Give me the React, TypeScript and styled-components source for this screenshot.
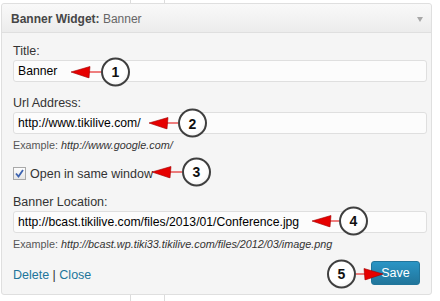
import styled, { createGlobalStyle } from "styled-components";

const GlobalStyle = createGlobalStyle`
  html, body {
    margin: 0;
    padding: 0;
    background: #fff;
  }
  body {
    font-family: "Liberation Sans", Arial, sans-serif;
    color: #333;
  }
`;

const callouts = [
  { n: 1, x: 71, y: 71.5, len: 30 },
  { n: 2, x: 149, y: 123, len: 29 },
  { n: 3, x: 152, y: 171.5, len: 30 },
  { n: 4, x: 312, y: 220.5, len: 27 },
  { n: 5, x: 327, y: 273.5, len: 27, right: true },
];

const App = () => {
  return (
    <Page>
      <GlobalStyle />
      <Stub $height={3} />
      <Widget>
        <Header>
          <HeaderTitle>
            Banner Widget: <span>Banner</span>
          </HeaderTitle>
          <Toggle />
        </Header>
        <Body>
          <Label>Title:</Label>
          <Input>Banner</Input>

          <Label $gap={14}>Url Address:</Label>
          <Input>http://www.tikilive.com/</Input>
          <Example>
            Example: <em>http://www.google.com/</em>
          </Example>

          <CheckRow>
            <CheckBox>
              <svg width="11" height="11" viewBox="0 0 11 11">
                <path d="M2 5.5 L4.5 8.5 L9 2" fill="none" stroke="#3d63b0" strokeWidth="1.8" />
              </svg>
            </CheckBox>
            Open in same window
          </CheckRow>

          <Label $gap={14}>Banner Location:</Label>
          <Input>http://bcast.tikilive.com/files/2013/01/Conference.jpg</Input>
          <Example>
            Example: <em>http://bcast.wp.tiki33.tikilive.com/files/2012/03/image.png</em>
          </Example>
        </Body>
        <Footer>
          <Links>
            <a>Delete</a> | <a>Close</a>
          </Links>
          <SaveButton>Save</SaveButton>
        </Footer>
      </Widget>
      <Stub $height={6} />

      {callouts.map(c => (
        <Callout key={c.n} $x={c.x} $y={c.y} $right={c.right}>
          <svg width={c.len} height="13" viewBox={`0 0 ${c.len} 13`}>
            <line x1="17" y1="6.5" x2={c.len} y2="6.5" stroke="#e00000" strokeWidth="1" />
            <polygon points="0,6.5 19,1 18,12.5" fill="#e60000" stroke="#a00000" strokeWidth="0.6" />
          </svg>
          <Circle>{c.n}</Circle>
        </Callout>
      ))}
    </Page>
  );
};

const Page = styled.div`
  position: relative;
  width: 440px;
  height: 301px;
  overflow: hidden;
`;

const Stub = styled.div<{ $height: number }>`
  width: 33px;
  height: ${p => p.$height}px;
  margin-left: 130px;
  border-left: 1px solid #dcdcdc;
  border-right: 1px solid #dcdcdc;
`;

const Widget = styled.div`
  box-sizing: border-box;
  width: 431px;
  height: 292px;
  margin-left: 1px;
  border: 1px solid #dfdfdf;
  border-radius: 3px;
  background: #f5f5f5;
  display: flex;
  flex-direction: column;
`;

const Header = styled.div`
  height: 28px;
  padding: 0 8px 0 9px;
  display: flex;
  align-items: center;
  justify-content: space-between;
  border-bottom: 1px solid #dfdfdf;
  border-radius: 3px 3px 0 0;
  background: linear-gradient(to bottom, #f9f9f9, #ececec);
`;

const HeaderTitle = styled.div`
  font-size: 12px;
  font-weight: bold;
  color: #464646;
  margin-top: 1px;

  span {
    font-weight: normal;
    color: #666;
  }
`;

const Toggle = styled.div`
  width: 0;
  height: 0;
  margin-top: 3px;
  border-left: 3.5px solid transparent;
  border-right: 3.5px solid transparent;
  border-top: 5px solid #a8a8a8;
`;

const Body = styled.div`
  padding: 11px 4px 0 11px;
  display: flex;
  flex-direction: column;
`;

const Label = styled.div<{ $gap?: number }>`
  font-size: 12.5px;
  line-height: 15px;
  color: #333;
  margin-top: ${p => p.$gap ?? 0}px;
  margin-bottom: 1px;
`;

const Input = styled.div`
  box-sizing: border-box;
  height: 22px;
  padding: 0 4px;
  display: flex;
  align-items: center;
  border: 1px solid #dfdfdf;
  border-radius: 3px;
  background: #fcfcfc;
  font-size: 12.2px;
  color: #000;
`;

const Example = styled.div`
  margin-top: 5px;
  font-size: 10.8px;
  line-height: 13px;
  color: #555;

  em {
    color: #333;
  }
`;

const CheckRow = styled.div`
  margin-top: 14px;
  height: 15px;
  display: flex;
  align-items: center;
  gap: 4px;
  font-size: 12.5px;
  color: #333;
`;

const CheckBox = styled.span`
  box-sizing: border-box;
  width: 13px;
  height: 13px;
  display: flex;
  align-items: center;
  justify-content: center;
  border: 1px solid #a9a9a9;
  background: linear-gradient(to bottom, #fdfdfd, #e6e6e6);
`;

const Footer = styled.div`
  margin-top: auto;
  padding: 0 11px 9px 11px;
  display: flex;
  align-items: center;
  justify-content: space-between;
`;

const Links = styled.div`
  margin-top: 4px;
  font-size: 12.5px;
  color: #333;

  a {
    color: #21759b;
    cursor: pointer;
  }
`;

const SaveButton = styled.button`
  box-sizing: border-box;
  width: 49px;
  height: 24px;
  padding: 0;
  border: 1px solid #21759b;
  border-radius: 3px;
  background: linear-gradient(to bottom, #2a95c5, #21759b);
  color: #fff;
  font-family: "Liberation Sans", Arial, sans-serif;
  font-size: 12.5px;
`;

const Callout = styled.div<{ $x: number; $y: number; $right?: boolean }>`
  position: absolute;
  left: ${p => p.$x}px;
  top: ${p => p.$y}px;
  transform: translateY(-50%);
  display: flex;
  flex-direction: ${p => (p.$right ? "row-reverse" : "row")};
  align-items: center;

  svg {
    display: block;
    transform: ${p => (p.$right ? "scaleX(-1)" : "none")};
  }
`;

const Circle = styled.div`
  box-sizing: border-box;
  width: 29px;
  height: 29px;
  display: flex;
  align-items: center;
  justify-content: center;
  border: 2px solid #3f3f3f;
  border-radius: 50%;
  background: radial-gradient(circle at 40% 35%, #fff 55%, #e9e9e9);
  font-size: 14px;
  font-weight: bold;
  color: #111;
`;

export default App;
